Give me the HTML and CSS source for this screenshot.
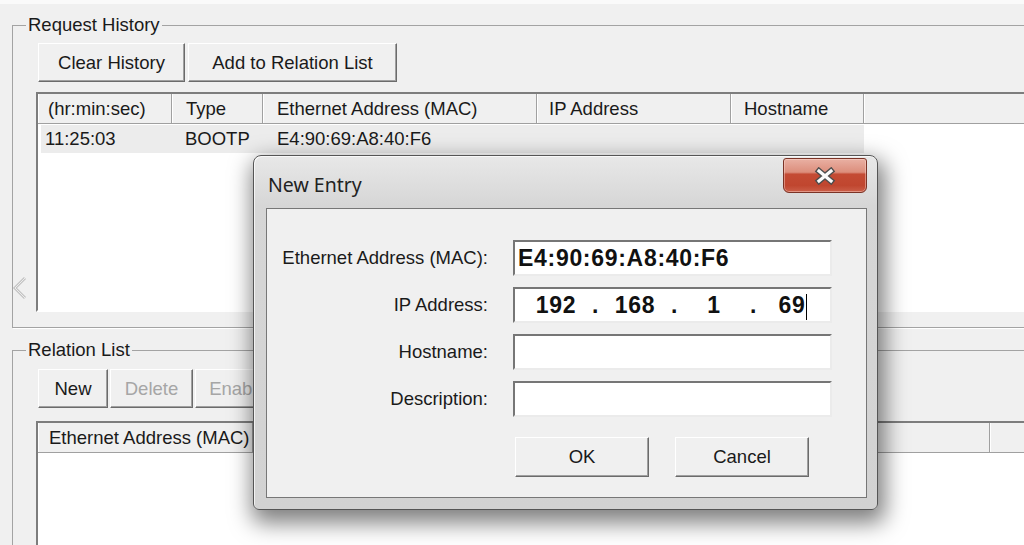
FILE: index.html
```html
<!DOCTYPE html>
<html lang="en">
  <head>
    <meta charset="UTF-8" />
    <meta name="viewport" content="width=device-width, initial-scale=1.0" />
    <title>BOOTP Server</title>
    <link rel="stylesheet" href="styles.css">
  </head>
  <body>
    <div class="topbar"></div>

    <fieldset class="group history">
      <legend>Request History</legend>
      <div class="btn-row">
        <button class="btn btn-clear">Clear History</button>
        <button class="btn btn-add">Add to Relation List</button>
      </div>
      <div class="listview history-list">
        <div class="lv-header">
          <div class="col c-time">(hr:min:sec)</div>
          <div class="col c-type">Type</div>
          <div class="col c-mac">Ethernet Address (MAC)</div>
          <div class="col c-ip">IP Address</div>
          <div class="col c-host">Hostname</div>
          <div class="col c-fill"></div>
        </div>
        <div class="lv-row selected">
          <div class="cell c-time">11:25:03</div>
          <div class="cell c-type">BOOTP</div>
          <div class="cell c-mac">E4:90:69:A8:40:F6</div>
          <div class="cell c-ip"></div>
          <div class="cell c-host"></div>
        </div>
      </div>
    </fieldset>

    <fieldset class="group relation">
      <legend>Relation List</legend>
      <div class="btn-row">
        <button class="btn btn-new">New</button>
        <button class="btn btn-delete" disabled>Delete</button>
        <button class="btn btn-enable" disabled>Enable</button>
      </div>
      <div class="listview relation-list">
        <div class="lv-header">
          <div class="col c-rmac">Ethernet Address (MAC)</div>
          <div class="col c-rtype"></div>
          <div class="col c-rip"></div>
          <div class="col c-rhost"></div>
          <div class="col c-rdesc"></div>
          <div class="col c-fill"></div>
        </div>
      </div>
    </fieldset>

    <svg class="side-handle" width="18" height="24" viewBox="0 0 18 24">
      <polyline points="14,2 4,12 14,22" fill="none" stroke="#c4c4c4" stroke-width="3" />
      <polyline points="14,2 4,12 14,22" fill="none" stroke="#ececec" stroke-width="1" />
    </svg>

    <div class="dialog">
      <div class="titlebar">
        <span class="title">New Entry</span>
        <button class="close">
          <svg width="22" height="18" viewBox="0 0 22 18">
            <path d="M5 4 L17 14 M17 4 L5 14" stroke="#4d4d4d" stroke-width="6" stroke-linecap="square" />
            <path d="M5 4 L17 14 M17 4 L5 14" stroke="#fafafa" stroke-width="3.2" stroke-linecap="square" />
          </svg>
        </button>
      </div>
      <div class="client">
        <div class="form">
          <label>Ethernet Address (MAC):</label>
          <div class="field mac">E4:90:69:A8:40:F6</div>

          <label>IP Address:</label>
          <div class="field ip">
            <span class="oct">192</span><span class="dot">.</span>
            <span class="oct">168</span><span class="dot">.</span>
            <span class="oct">1</span><span class="dot">.</span>
            <span class="oct">69<span class="caret"></span></span>
          </div>

          <label>Hostname:</label>
          <div class="field"></div>

          <label>Description:</label>
          <div class="field"></div>

          <div class="actions">
            <button class="btn dlg-btn">OK</button>
            <button class="btn dlg-btn">Cancel</button>
          </div>
        </div>
      </div>
    </div>
  </body>
</html>
```

FILE: styles.css
```css
body {
  margin: 0;
  height: 545px;
  overflow: hidden;
  position: relative;
  background: #f0f0f0;
  color: #1a1a1a;
  font-family: "Liberation Sans", Arial, sans-serif;
  font-size: 18.5px;
}

.topbar {
  height: 4px;
  background: #fafafa;
}

/* group boxes */
.group {
  margin: 11px -80px 0 12px;
  padding: 8px 0 15px 23px;
  border: 1px solid #a3a3a3;
  box-shadow: 1px 1px 0 #fff;
  min-width: 0;
}

.group legend {
  margin-left: -10px;
  padding: 0 2px;
  line-height: 20px;
}

.relation {
  margin-top: 12px;
  padding-top: 9px;
}

.btn-row {
  display: flex;
  gap: 3px;
  padding-left: 2px;
}

.relation .btn-row {
  gap: 2px;
}

.btn {
  font-family: "Liberation Sans", Arial, sans-serif;
  font-size: 18.5px;
  color: #1a1a1a;
  background: #f0f0f0;
  height: 39px;
  padding: 0;
  border: 1px solid;
  border-color: #fff #6b6b6b #6b6b6b #fff;
  box-shadow: inset -1px -1px 0 #a0a0a0;
}

.btn:disabled {
  color: #a6a6a6;
}

.btn-clear { width: 147px; }
.btn-add { width: 209px; }
.btn-new { width: 70px; }
.btn-delete { width: 83px; }
.btn-enable { width: 86px; }

/* list views */
.listview {
  margin-top: 10px;
  height: 220px;
  box-sizing: border-box;
  background: #fff;
  border: 2px solid;
  border-color: #7d7d7d #fff #fff #7d7d7d;
  overflow: hidden;
}

.relation-list {
  margin-top: 13px;
  height: 200px;
}

.lv-header {
  display: flex;
  height: 30px;
  box-sizing: border-box;
  background: #f0f0f0;
  border-bottom: 1px solid #a0a0a0;
}

.col {
  box-sizing: border-box;
  line-height: 29px;
  padding-left: 12px;
  white-space: nowrap;
  overflow: hidden;
  border-right: 1px solid #a0a0a0;
  box-shadow: inset 1px 0 0 #fff;
}

.col.c-time { width: 134px; padding-left: 10px; }
.col.c-type { width: 91px; padding-left: 14px; }
.col.c-mac { width: 274px; padding-left: 14px; }
.col.c-ip { width: 194px; }
.col.c-host { width: 133px; padding-left: 13px; }
.col.c-fill { flex: 1; border-right: none; }

.col.c-rmac { width: 215px; padding-left: 11px; }
.col.c-rtype { width: 100px; }
.col.c-rip { width: 190px; }
.col.c-rhost { width: 232px; }
.col.c-rdesc { width: 215px; }

.lv-row {
  display: flex;
  width: 823px;
  height: 28px;
  margin: 1px 0 0 3px;
  line-height: 28px;
}

.lv-row.selected {
  background: #ececec;
}

.cell {
  box-sizing: border-box;
  padding-left: 13px;
  white-space: nowrap;
}

.cell.c-time { width: 131px; padding-left: 4px; }
.cell.c-type { width: 91px; }
.cell.c-mac { width: 274px; padding-left: 14px; }
.cell.c-ip { width: 194px; }
.cell.c-host { width: 133px; }

.side-handle {
  position: absolute;
  left: 11px;
  top: 276px;
}

/* dialog */
.dialog {
  position: absolute;
  left: 253px;
  top: 155px;
  width: 625px;
  box-sizing: border-box;
  padding: 0 10px 11px 12px;
  border: 1px solid #555;
  border-radius: 8px 8px 6px 6px;
  background: linear-gradient(#e8e8e8, #d6d6d6 50px, #d2d2d2);
  box-shadow: 3px 9px 22px 4px rgba(0, 0, 0, 0.5),
    inset 1px 1px 0 rgba(255, 255, 255, 0.7);
}

.titlebar {
  display: flex;
  justify-content: space-between;
  align-items: flex-start;
  height: 52px;
}

.title {
  margin-top: 17px;
  padding-left: 2px;
  font-family: "Noto Sans", "Open Sans", sans-serif;
  font-size: 19.5px;
  line-height: 24px;
  color: #222;
}

.close {
  margin-top: 2px;
  width: 84px;
  height: 35px;
  padding: 0;
  display: flex;
  align-items: center;
  justify-content: center;
  border: 1px solid #7a3326;
  border-radius: 3px 3px 6px 6px;
  background: linear-gradient(#e9b0a3 0%, #dc8e7c 40%, #c44b34 46%, #c0462f 80%, #cb5f49 100%);
  box-shadow: inset 0 0 0 1px rgba(255, 220, 210, 0.45);
}

.client {
  border: 1px solid #777;
  background: #f0f0f0;
  padding: 31px 0 20px 0;
}

.form {
  display: grid;
  grid-template-columns: 221px 319px;
  grid-template-rows: repeat(4, 36px) auto;
  column-gap: 25px;
  row-gap: 11px;
}

.form label {
  text-align: right;
  line-height: 36px;
  white-space: nowrap;
}

.field {
  height: 36px;
  box-sizing: border-box;
  background: #fff;
  border: 2px solid;
  border-color: #767676 #ebebeb #ebebeb #767676;
}

.mac,
.ip {
  font-weight: bold;
  font-size: 23px;
  letter-spacing: 0.7px;
  line-height: 32px;
  color: #111;
}

.mac {
  padding-left: 3px;
}

.ip {
  display: flex;
  padding-left: 5px;
}

.ip .oct {
  width: 72px;
  text-align: center;
}

.ip .dot {
  width: 7px;
  text-align: center;
}

.caret {
  display: inline-block;
  width: 1px;
  height: 26px;
  margin-left: 1px;
  background: #000;
  vertical-align: middle;
}

.actions {
  grid-column: 2;
  display: flex;
  gap: 26px;
  margin-top: 9px;
  padding-left: 2px;
}

.dlg-btn {
  width: 134px;
  height: 40px;
}
```
